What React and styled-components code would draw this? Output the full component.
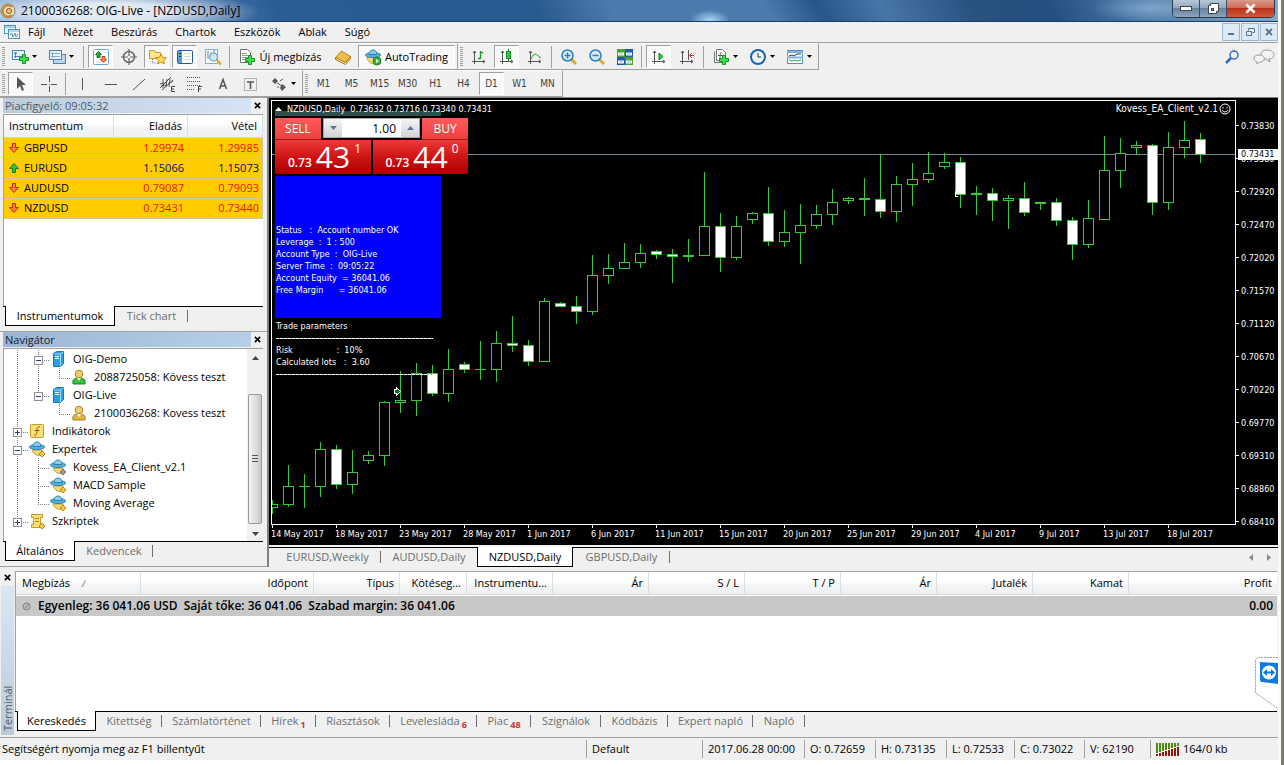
import React from "react";
import styled, { createGlobalStyle, css } from "styled-components";

const GlobalStyle = createGlobalStyle`
  * {
    box-sizing: border-box;
  }
  body {
    margin: 0;
    background-color: #ffffff;
    font-family: "Open Sans", sans-serif;
    font-size: 11px;
    line-height: 16px;
    color: #000000;
  }
  button, input {
    font: inherit;
    color: inherit;
    margin: 0;
    padding: 0;
    border: 0;
    background: none;
  }
  a {
    color: inherit;
    text-decoration: none;
  }
  ul {
    list-style: none;
    margin: 0;
    padding: 0;
  }
  svg {
    display: block;
    flex-shrink: 0;
  }
`;

/* ---------- window ---------- */

const Desktop = styled.div`
  display: flex;
  flex-direction: column;
  height: 100vh;
  min-height: 700px;
  padding-bottom: 5px;
  border-right: 3px solid #7b7b73;
  overflow: hidden;
`;
const Window = styled.div`
  display: flex;
  flex-direction: column;
  flex: 1;
  min-height: 0;
  background-color: #f0f0f0;
  border-right: 3px solid #fafafa;
`;
const TitleBar = styled.header`
  display: flex;
  align-items: flex-start;
  justify-content: space-between;
  height: 22px;
  border-bottom: 1px solid #1d3d68;
  background:
    radial-gradient(ellipse 150px 22px at 110px 12px, #ffffffcc 40%, #ffffff00 100%),
    radial-gradient(ellipse 20px 10px at 710px 20px, #a9d4f5, #a9d4f500),
    radial-gradient(ellipse 60px 14px at 1150px 8px, #9fc0dc99, #9fc0dc00),
    linear-gradient(60deg, #8fb2d6 0%, #5d88bb 12%, #2a5c96 22%, #28598f 42%, #4c7bae 48%, #4b7aad 60%, #28568a 64%, #4876a8 69%, #27517f 76%, #24507f 82%, #4473a4 88%, #86acd0 100%);
`;
const TitleText = styled.h1`
  display: flex;
  align-items: center;
  gap: 5px;
  margin: 0;
  height: 21px;
  font-size: 12px;
  font-weight: 400;
`;
const CaptionButtons = styled.div`
  display: flex;
  margin-right: 3px;
  height: 18px;
  border: 1px solid #2b3a4a;
  border-top: 0;
  border-radius: 0 0 5px 5px;
  overflow: hidden;
`;
const CaptionButton = styled.button`
  display: flex;
  align-items: center;
  justify-content: center;
  width: ${(p) => (p.$close ? "47px" : "27px")};
  border-right: ${(p) => (p.$close ? "0" : "1px solid #3c4d60")};
  background: ${(p) =>
    p.$close
      ? "linear-gradient(#d99a8c, #cf6a55 45%, #b8321b 50%, #d2593a)"
      : "linear-gradient(#b7c8d8, #93a8bd 45%, #68839f 50%, #8ba6c0)"};
`;
const MenuBar = styled.nav`
  display: flex;
  align-items: center;
  justify-content: space-between;
  height: 21px;
  border-bottom: 1px solid #a0a0a0;
  ul {
    display: flex;
    align-items: center;
    gap: 18px;
  }
`;
const MenuLeft = styled.div`
  display: flex;
  align-items: center;
  gap: 8px;
  padding-left: 4px;
`;
const ChildButtons = styled.div`
  display: flex;
  gap: 1px;
  button {
    display: flex;
    align-items: center;
    justify-content: center;
    width: 18px;
    height: 18px;
    border: 1px solid #9fb6c8;
    background-color: #dceaf6;
  }
`;

/* ---------- toolbars ---------- */

const ToolRow = styled.div`
  display: flex;
  align-items: stretch;
  height: 27px;
`;
const ToolGroup = styled.div`
  display: flex;
  align-items: center;
  gap: 3px;
  padding: 0 2px;
  border-top: 1px solid #ffffff;
  border-right: 1px solid #a0a0a0;
  border-bottom: 1px solid #a0a0a0;
`;
const Grip = styled.span`
  width: 3px;
  height: 19px;
  background: repeating-linear-gradient(#a0a0a0 0 1px, #f0f0f0 1px 2px);
`;
const Separator = styled.span`
  width: 1px;
  height: 22px;
  margin: 0 1px;
  background-color: #a0a0a0;
`;
const ToolButton = styled.button`
  display: flex;
  align-items: center;
  justify-content: center;
  gap: 4px;
  width: ${(p) => p.$width || 25}px;
  height: 23px;
  white-space: nowrap;
  border: 1px solid transparent;
  ${(p) =>
    p.$pressed &&
    css`
      background-color: #f9f9f9;
      border-color: #a0a0a0 #ffffff #ffffff #a0a0a0;
    `}
`;
const PeriodButton = styled(ToolButton)`
  font-family: "DejaVu Sans Condensed", sans-serif;
  font-size: 10px;
  color: #404040;
`;
const ToolRight = styled.div`
  display: flex;
  align-items: center;
  gap: 14px;
  margin-left: auto;
  padding-right: 3px;
`;

/* ---------- panels ---------- */

const Workspace = styled.main`
  display: flex;
  flex: 1;
  min-height: 0;
`;
const Sidebar = styled.aside`
  display: flex;
  flex-direction: column;
  width: 269px;
  flex-shrink: 0;
  border-top: 1px solid #a0a0a0;
  border-right: 2px solid #808080;
`;
const Panel = styled.section`
  display: flex;
  flex-direction: column;
  height: ${(p) => (p.$fill ? "auto" : "234px")};
  flex: ${(p) => (p.$fill ? "1" : "none")};
  min-height: 0;
  padding: 0 4px 5px 3px;
  border-bottom: 1px solid #a0a0a0;
`;
const PanelTitle = styled.h2`
  display: flex;
  justify-content: space-between;
  align-items: center;
  height: 15px;
  margin: 0 0 1px;
  padding-left: 2px;
  font-size: 11px;
  font-weight: 400;
  color: ${(p) => (p.$active ? "#1a1a2a" : "#4d5a66")};
  background: ${(p) =>
    p.$active
      ? "linear-gradient(90deg, #9bb6d4, #b8d0ea)"
      : "linear-gradient(90deg, #bccddc, #d6e5f5)"};
  button {
    display: flex;
    align-items: center;
    justify-content: center;
    width: 12px;
    height: 15px;
    background-color: #f0f0f0;
  }
`;
const PanelBody = styled.div`
  display: flex;
  flex: 1;
  min-height: 0;
  overflow: hidden;
  background-color: #ffffff;
  border-top: 1px solid #a0a0a0;
  border-left: 1px solid #a0a0a0;
`;
const TabStrip = styled.div`
  display: flex;
  align-items: flex-start;
  height: ${(p) => p.$height || 20}px;
  padding-left: ${(p) => p.$indent || 2}px;
  border-top: 1px solid #000000;
`;
const TabItem = styled.button`
  position: relative;
  display: flex;
  align-items: center;
  justify-content: center;
  width: ${(p) => p.$width}px;
  height: 18px;
  color: #6d6d6d;
  &::after {
    content: "";
    position: absolute;
    right: 0;
    top: 3px;
    height: 12px;
    border-right: 1px solid ${(p) => (p.$plain ? "transparent" : "#6d6d6d")};
  }
  sub {
    margin-left: 2px;
    padding-top: 7px;
    font-size: 9px;
    font-weight: 700;
    line-height: 9px;
    color: #d03030;
  }
  ${(p) =>
    p.$active &&
    css`
      height: 20px;
      margin-top: -1px;
      color: #000000;
      background-color: #ffffff;
      border: 1px solid #000000;
      border-top: 0;
      &::after {
        display: none;
      }
    `}
`;

const headCell = css`
  height: 23px;
  padding: 0 5px;
  font-weight: 400;
  background: linear-gradient(#ffffff 40%, #f3f4f6 60%, #f0f1f3);
  border-right: 1px solid #dcdfe3;
  border-bottom: 1px solid #d5d5d5;
`;
const QuoteTable = styled.table`
  width: 100%;
  height: 104px;
  border-collapse: separate;
  border-spacing: 0;
  table-layout: fixed;
  th {
    ${headCell}
    text-align: right;
  }
  th:first-child, td:first-child {
    text-align: left;
  }
  td {
    height: 20px;
    padding: 0 3px 0 5px;
    text-align: right;
    background-color: #ffcc00;
    border-right: 1px solid #c9c6a4;
    border-bottom: 1px solid #c9c6a4;
  }
  td span {
    display: flex;
    align-items: center;
    gap: 5px;
  }
`;
const QuoteValue = styled.td`
  color: ${(p) => (p.$up ? "#0a0a78" : "#e81500")};
`;

const Tree = styled.ul`
  flex: 1;
  min-width: 0;
  && {
    padding-top: 1px;
  }
  overflow: hidden;
`;
const TreeItem = styled.li`
  display: flex;
  align-items: center;
  height: 18px;
  white-space: nowrap;
  a {
    margin-left: 7px;
  }
`;
const ScrollBar = styled.div`
  display: flex;
  flex-direction: column;
  align-items: center;
  justify-content: space-between;
  width: 16px;
  padding: 7px 0 5px;
  background-color: #f0f0f0;
`;
const ScrollThumb = styled.div`
  display: flex;
  align-items: center;
  justify-content: center;
  width: 14px;
  height: 130px;
  margin-top: 26px;
  border: 1px solid #989898;
  border-radius: 2px;
  background: linear-gradient(90deg, #f5f5f5, #dcdcdc 60%, #c4c4c8);
`;

/* ---------- chart ---------- */

const ChartPane = styled.section`
  display: flex;
  flex-direction: column;
  flex: 1;
  min-width: 0;
  border-top: 1px solid #808080;
`;
const ChartFrame = styled.div`
  display: flex;
  flex: 1;
  min-height: 0;
  padding: 2px 0 0 2px;
  background-color: #000000;
  color: #ffffff;
  font-family: "DejaVu Sans Condensed", sans-serif;
  font-size: 9px;
  line-height: 12px;
`;
const PlotColumn = styled.div`
  display: flex;
  flex-direction: column;
  flex: 1;
  min-width: 0;
`;
const Plot = styled.div`
  position: relative;
  flex: 1;
  min-height: 0;
  overflow: hidden;
  border: 1px solid #ffffff;
  svg.candles {
    width: 100%;
    height: 100%;
  }
`;
const TimeAxis = styled.div`
  display: flex;
  height: 20px;
  overflow: hidden;
  span {
    width: 64px;
    flex-shrink: 0;
    white-space: nowrap;
  }
  span::before {
    content: "";
    display: block;
    height: 3px;
    margin-left: 1px;
    border-left: 1px solid #ffffff;
  }
`;
const PriceAxis = styled.div`
  position: relative;
  width: 42px;
  padding-top: 9px;
  span {
    display: flex;
    align-items: center;
    height: 33px;
  }
  span::before {
    content: "";
    width: 3px;
    margin-right: 2px;
    border-top: 1px solid #ffffff;
  }
`;
const LastPrice = styled.b`
  position: absolute;
  left: 2px;
  right: 0;
  top: 49px;
  height: 11px;
  padding-left: 3px;
  font-weight: 400;
  line-height: 11px;
  color: #000000;
  background-color: #ffffff;
`;
const ChartCaption = styled.div`
  position: absolute;
  z-index: 1;
  top: 2px;
  left: 3px;
  right: 4px;
  display: flex;
  align-items: center;
  gap: 5px;
  white-space: pre;
`;
const ExpertName = styled.span`
  display: flex;
  align-items: center;
  gap: 1px;
  margin-left: auto;
  font-size: 10px;
`;
const Comment = styled.div`
  position: absolute;
  top: ${(p) => p.$top}px;
  left: 3px;
  width: 166px;
  height: ${(p) => p.$height}px;
  padding-left: 1px;
  background-color: ${(p) => p.$color || "transparent"};
  white-space: pre;
  overflow: hidden;
`;
const CommentText = styled.p`
  margin: ${(p) => p.$offset || 0}px 0 0;
`;
const Dashes = styled.hr`
  width: 157px;
  height: 1px;
  margin: 6px 0 5px;
  border: 0;
  background: repeating-linear-gradient(90deg, #ffffff 0 3px, #888888 3px 4px);
`;
const TradePanel = styled.div`
  position: absolute;
  top: 17px;
  left: 3px;
  display: flex;
  flex-direction: column;
  width: 193px;
  background-color: #000000;
  font-family: "Open Sans", sans-serif;
`;
const TradeRow = styled.div`
  display: flex;
  justify-content: space-between;
`;
const SideButton = styled.button`
  width: 46px;
  height: 22px;
  font-size: 12px;
  background: linear-gradient(#ff5a5a, #ee3f3f);
  border-bottom: 1px solid #a01818;
`;
const Volume = styled.div`
  display: flex;
  align-items: stretch;
  width: 97px;
  height: 20px;
  border: 1px solid #a8a8a8;
  background-color: #ffffff;
  button {
    display: flex;
    align-items: center;
    justify-content: center;
    width: 18px;
    background: linear-gradient(#f4f4f4, #d4d4d8);
  }
  input {
    flex: 1;
    min-width: 0;
    padding-right: 5px;
    font-size: 12px;
    text-align: right;
    color: #000000;
  }
`;
const PriceButton = styled.button`
  display: flex;
  align-items: flex-end;
  justify-content: center;
  gap: 4px;
  width: ${(p) => p.$width}px;
  height: 34px;
  padding: 0 0 5px 3px;
  line-height: 1;
  background: linear-gradient(#ec3a3a, #cf1414 50%, #ac0000);
  b {
    font-size: 12px;
    font-weight: 600;
  }
  strong {
    font-size: 30px;
    font-weight: 400;
    line-height: 24px;
  }
  i {
    align-self: flex-start;
    padding-top: 3px;
    font-size: 12px;
    font-style: normal;
  }
`;
const ChartTabs = styled.div`
  display: flex;
  justify-content: space-between;
  height: 22px;
  padding-top: 2px;
  background-color: #f0f0f0;
`;
const ChartTabStrip = styled(TabStrip)`
  flex: 1;
`;
const TabArrows = styled.div`
  display: flex;
  gap: 14px;
  align-items: center;
  height: 18px;
  margin-left: auto;
  padding-right: 7px;
`;

/* ---------- terminal ---------- */

const Terminal = styled.section`
  position: relative;
  display: flex;
  height: 171px;
  flex-shrink: 0;
  padding: 4px 1px 0 1px;
  border-bottom: 1px solid #a0a0a0;
`;
const TerminalSide = styled.div`
  display: flex;
  flex-direction: column;
  align-items: center;
  width: 13px;
  margin: 1px 1px 2px 0;
  gap: 4px;
  button {
    height: 10px;
  }
  h2 {
    flex: 1;
    width: 13px;
    margin: 0;
    padding-top: 4px;
    line-height: 13px;
    font-size: 11px;
    font-weight: 400;
    color: #4d5a66;
    writing-mode: vertical-rl;
    transform: rotate(180deg);
    background: linear-gradient(#b9cbd9, #d9e7f5);
  }
`;
const TerminalMain = styled.div`
  display: flex;
  flex-direction: column;
  flex: 1;
  min-width: 0;
`;
const TerminalTable = styled.table`
  width: 100%;
  height: 44px;
  border-collapse: separate;
  border-spacing: 0;
  table-layout: fixed;
  th {
    ${headCell}
    text-align: right;
    white-space: nowrap;
  }
  th:first-child {
    text-align: left;
    padding-left: 6px;
  }
  th:last-child {
    border-right: 0;
  }
  td {
    height: 20px;
    padding: 0 4px 0 6px;
    font-size: 12px;
    font-weight: 600;
    white-space: pre;
    background-color: #c8c8c8;
    border-top: 1px solid #ffffff;
  }
  td:last-child {
    text-align: right;
  }
  td span {
    display: flex;
    align-items: center;
    gap: 7px;
  }
`;
const SortMark = styled.i`
  margin-left: 12px;
  font-size: 9px;
  color: #666666;
`;
const RemoteTab = styled.div`
  position: absolute;
  right: 0;
  top: 90px;
`;
const StatusBar = styled.footer`
  display: flex;
  align-items: center;
  height: 22px;
  flex-shrink: 0;
`;
const StatusHint = styled.span`
  flex: 1;
  padding-left: 2px;
`;
const StatusCell = styled.span`
  display: flex;
  align-items: center;
  gap: 3px;
  width: ${(p) => p.$width}px;
  height: 18px;
  padding-left: 5px;
  border-left: 1px solid #a0a0a0;
  white-space: nowrap;
`;

/* ---------- icons ---------- */

const Plus = ({ x = 8, y = 6 }) => (
  <path
    d={`M${x + 3.5} ${y + 0.5}h3v3h3v3h-3v3h-3v-3h-3v-3h3z`}
    fill="#3fe04a"
    stroke="#12961e"
    strokeWidth="1"
  />
);
const AxesPath = () => (
  <path d="M3.500 2v13M1 12.500h13M2 4l1.500-2 1.500 2M12 11l2 1.500-2 1.500" fill="none" stroke="#555" />
);
const Hat = ({ body = "M3 9c2 5 6 6 9 5l1-5z" }) => (
  <>
    <path d={body} fill="#f3d878" stroke="#c39c34" />
    <ellipse cx="8" cy="6" rx="7.500" ry="2.500" fill="#58b0df" stroke="#3080ae" />
    <path d="M4 5.500c0-6 8-6 8 0z" fill="#86cdf0" stroke="#3080ae" />
  </>
);

const glyphs = {
  logo: (
    <>
      <circle cx="8" cy="8" r="7" fill="#e9dcc6" stroke="#8d7a5c" />
      <path d="M12 4a5.500 5.500 0 1 0 0 8" fill="none" stroke="#c78a2e" strokeWidth="2" />
      <circle cx="9" cy="8" r="2.500" fill="#f4c46a" stroke="#8a5a1a" />
    </>
  ),
  charts: (
    <>
      <rect x="0.500" y="1.500" width="11" height="8" fill="#e7f3fb" stroke="#4c93bd" />
      <rect x="4.500" y="5.500" width="11" height="9" fill="#fff" stroke="#4c93bd" />
      <path d="M1 3h10M5 7h10" stroke="#6bb0d6" />
      <path d="M6 11l2-2 1 4 2-4 1 4 2-3" fill="none" stroke="#4c93bd" />
    </>
  ),
  newChart: (
    <>
      <rect x="0.500" y="1.500" width="12" height="9" fill="#e8f4fc" stroke="#4b83b5" />
      <path d="M3.500 3v6M2 7.500h9M2 5l1.500-2 1.500 2" fill="none" stroke="#4b83b5" />
      <Plus x={7} y={5} />
    </>
  ),
  profiles: (
    <>
      <rect x="4.500" y="5.500" width="12" height="9" fill="#bcd9f0" stroke="#4b83b5" />
      <rect x="0.500" y="1.500" width="12" height="9" fill="#e8f4fc" stroke="#4b83b5" />
      <path d="M3.500 3v6M2 7.500h9M2 4.500h9" stroke="#7fadd2" />
    </>
  ),
  marketWatch: (
    <>
      <rect x="0.500" y="0.500" width="15" height="15" rx="1" fill="#fff" stroke="#6da6da" />
      <path d="M9 3h4M3 13h5" stroke="#d5e2ee" />
      <path d="M5.500 2.500l3 3h-1.500v3h-3v-3h-1.500z" fill="#29b33a" stroke="#11751d" />
      <path d="M10.500 13.500l3-3h-1.500v-3h-3v3h-1.500z" fill="#ff8c5a" stroke="#d23a10" />
    </>
  ),
  dataWindow: (
    <>
      <circle cx="8" cy="8" r="5.500" fill="none" stroke="#666" strokeWidth="1.500" />
      <path d="M8 0v7M8 9v7M0 8h7M9 8h7" stroke="#666" strokeWidth="1.200" />
    </>
  ),
  navigator: (
    <>
      <path d="M0.500 1.500h5l1 2h5v6h-11z" fill="#fbe48a" stroke="#c89f2a" />
      <path d="M3.500 10v4h4" fill="none" stroke="#777" strokeDasharray="1 1" />
      <path d="M12 5l1.500 3.500 4 .3-3 2.500 1 3.700-3.500-2-3.500 2 1-3.700-3-2.500 4-.3z" fill="#ffdf55" stroke="#c48c10" />
    </>
  ),
  terminal: (
    <>
      <rect x="0.500" y="1.500" width="15" height="13" rx="1" fill="#fff" stroke="#1f5a9c" />
      <rect x="1" y="2" width="4" height="12" fill="#5a9bdc" />
      <path d="M7 4.500h7M7 7.500h7M7 10.500h7" stroke="#c5dcf0" />
      <path d="M2 4.500h2M2 7.500h2" stroke="#0f3f78" />
    </>
  ),
  tester: (
    <>
      <rect x="0.500" y="0.500" width="12" height="14" fill="#f3f9fd" stroke="#86b0cc" />
      <path d="M3 2v8M6 3v7M9 1v8" stroke="#6d8ea4" />
      <circle cx="8.500" cy="8" r="4" fill="#cfe7f7cc" stroke="#5c9bc8" />
      <path d="M12 11l4 4.500" stroke="#e0a930" strokeWidth="2.500" />
    </>
  ),
  newOrder: (
    <>
      <path d="M1.500 0.500h7l3 3v10h-10z" fill="#fff" stroke="#777" />
      <path d="M3 4.500h5M3 6.500h6M3 8.500h6M3 10.500h3" stroke="#999" />
      <Plus x={6} y={6} />
    </>
  ),
  book: (
    <>
      <path d="M0.500 8.500v2l10 5 5-6v-2l-5 6z" fill="#fff1bf" stroke="#a97514" />
      <path d="M0.500 8.500l6-6.500 9 5.500-5 6z" fill="#efbd45" stroke="#b98420" />
    </>
  ),
  expert: (
    <>
      <Hat />
      <path d="M13 10l3 3-3 3-3-3z" fill="#f4c53e" stroke="#b98817" />
    </>
  ),
  expertOff: (
    <>
      <Hat />
      <path d="M13 10l3 3-3 3-3-3z" fill="#999" stroke="#777" />
    </>
  ),
  autoTrading: (
    <>
      <Hat body="M2 8c1 6 5 7 9 7l2-7z" />
      <circle cx="12" cy="12" r="4" fill="#31b53c" stroke="#148a20" />
      <path d="M11 10v4l3-2z" fill="#fff" />
    </>
  ),
  bars: (
    <>
      <AxesPath />
      <path d="M9.500 2v8M9.500 3.500h2.500M7 9.500h2.500" stroke="#1a9a2a" strokeWidth="1.300" />
    </>
  ),
  candle: (
    <>
      <AxesPath />
      <path d="M9.500 0v12" stroke="#148a20" />
      <rect x="7.500" y="2.500" width="4" height="7" fill="#32c944" stroke="#148a20" />
    </>
  ),
  line: (
    <>
      <AxesPath />
      <path d="M4 10c2-5 4-6 6-4l4 3" fill="none" stroke="#1a9a2a" />
    </>
  ),
  zoomIn: (
    <>
      <path d="M10 10l5 5" stroke="#d9a928" strokeWidth="3" />
      <circle cx="6.500" cy="6.500" r="5.500" fill="#d5ecfa" stroke="#2d7cc0" strokeWidth="1.500" />
      <path d="M6.500 3.500v6M3.500 6.500h6" stroke="#2d7cc0" strokeWidth="1.500" />
    </>
  ),
  zoomOut: (
    <>
      <path d="M10 10l5 5" stroke="#d9a928" strokeWidth="3" />
      <circle cx="6.500" cy="6.500" r="5.500" fill="#d5ecfa" stroke="#2d7cc0" strokeWidth="1.500" />
      <path d="M3.500 6.500h6" stroke="#2d7cc0" strokeWidth="1.500" />
    </>
  ),
  tile: (
    <>
      <rect x="0" y="0" width="8" height="8" fill="#4aa32c" />
      <rect x="8" y="0" width="8" height="8" fill="#2458b0" />
      <rect x="0" y="8" width="8" height="8" fill="#2458b0" />
      <rect x="8" y="8" width="8" height="8" fill="#4aa32c" />
      <path d="M1 5h6M9 5h6M1 13h6M9 13h6" stroke="#fff" strokeWidth="3" />
      <path d="M2 5h4M10 5h4M2 13h4M10 13h4" stroke="#9bc2a0" />
    </>
  ),
  autoScroll: (
    <>
      <AxesPath />
      <path d="M8 4v7l4-3.500z" fill="#32c944" stroke="#148a20" />
    </>
  ),
  shift: (
    <>
      <AxesPath />
      <path d="M9.500 1v10" stroke="#555" />
      <path d="M15 6.500h-4M13 4l-2.500 2.500 2.500 2.500" fill="none" stroke="#c33a10" />
    </>
  ),
  indicators: (
    <>
      <path d="M3.500 0.500h6l3 3v8h-9z" fill="#fff" stroke="#777" />
      <path d="M1.500 2.500v11h8" fill="none" stroke="#777" />
      <path d="M9 4c-2-1-2 1-2 6M5 6.500h4" fill="none" stroke="#555" />
      <Plus x={6} y={6} />
    </>
  ),
  clock: (
    <>
      <circle cx="8" cy="8" r="7" fill="#e9f4fb" stroke="#1c63b2" strokeWidth="2" />
      <path d="M8 4v4h3" fill="none" stroke="#333" />
    </>
  ),
  template: (
    <>
      <rect x="0.500" y="1.500" width="15" height="13" fill="#fff" stroke="#5490c0" />
      <path d="M0 3h16M0 8.500h16" stroke="#7cb4e0" strokeWidth="2" />
      <path d="M2 7l3-1 2 1 3-2 4 0" fill="none" stroke="#333" />
      <path d="M2 11l3 1 3-1 2 1 4-1" fill="none" stroke="#3a9a3a" />
    </>
  ),
  cursor: <path d="M4 1v12l3-3 2 5 2-1-2-5h4z" fill="#555" />,
  crosshair: <path d="M8.500 0v6M8.500 10v6M0 8.500h6M10 8.500h6M8 8.500h1" stroke="#555" />,
  vline: <path d="M7.500 2v12" stroke="#555" />,
  hline: <path d="M2 8.500h12" stroke="#555" />,
  trend: <path d="M2 14L14 3" stroke="#555" />,
  channel: (
    <>
      <path d="M1 12L12 1M3 14L14 4M1 8l5-1M4 12V3M7 11l1-8M9 8l5-3M10 11l1-8M2 10l6-1" fill="none" stroke="#555" />
      <path d="M16 10.500h-3.500v5H16M12.500 13H15" fill="none" stroke="#444" />
    </>
  ),
  fibo: (
    <>
      <path d="M0 1.500h14M0 5.500h14M0 9.500h14M0 13.500h8" stroke="#555" strokeDasharray="1 1" />
      <path d="M15 10.500h-3.500V16M11.500 13H14" fill="none" stroke="#444" />
    </>
  ),
  letterA: <path d="M4.500 13L8 3.500l3.500 9.500M5.500 10h5" fill="none" stroke="#555" strokeWidth="1.500" />,
  label: (
    <>
      <rect x="1.500" y="2.500" width="12" height="12" fill="none" stroke="#777" strokeDasharray="1 1" />
      <path d="M4 6h7M7.500 6v7" stroke="#555" strokeWidth="1.600" />
    </>
  ),
  arrows: (
    <>
      <path d="M4 2l3 3-3 3-3-3zM11 8l4 3-4 4-2-3z" fill="#555" />
      <path d="M6 11l2 0M6 7l5 3M9 5l3-2" stroke="#555" />
    </>
  ),
  server: (
    <>
      <path d="M3.500 2.500l3-2h7v12l-3 3h-7z" fill="#2aa0e0" stroke="#1678b4" />
      <path d="M10.500 15V3h-6M10.500 3l3-2" fill="none" stroke="#9fdcfa" />
      <path d="M5 5.500h4M5 7.500h4" stroke="#fff" />
    </>
  ),
  userGreen: (
    <>
      <path d="M2 15c-1-5 2-6 6-6s7 1 6 6z" fill="#2fc23a" stroke="#148a20" />
      <circle cx="8" cy="5" r="3.800" fill="#f0cf6a" stroke="#a98020" />
      <path d="M6 9l2 3 2-3" fill="#fff" />
    </>
  ),
  userGold: (
    <>
      <path d="M2 15c-1-5 2-6 6-6s7 1 6 6z" fill="#dcb640" stroke="#a98020" />
      <circle cx="8" cy="5" r="3.800" fill="#f0cf6a" stroke="#a98020" />
      <path d="M6 9l2 3 2-3" fill="#fff" />
    </>
  ),
  indicator: (
    <>
      <rect x="1.500" y="1.500" width="13" height="13" rx="1" fill="#fbe07a" stroke="#c59b22" />
      <path d="M11 4c-3-1-3 1-3 4s-1 5-3 4M5.500 7.500h5" fill="none" stroke="#8a6410" />
    </>
  ),
  script: (
    <>
      <path d="M2.500 1.500h11v3h-2v8h2v2h-11v-3h2v-7h-2z" fill="#fbe07a" stroke="#c59b22" />
      <path d="M6 5.500h4M6 8.500h4" stroke="#b98817" />
      <path d="M13 10l3 3-3 3-3-3z" fill="#f4c53e" stroke="#b98817" />
    </>
  ),
};

const Icon = ({ name, size = 16 }) => (
  <svg width={size} height={size} viewBox="0 0 16 16" overflow="visible" aria-hidden="true">
    {glyphs[name]}
  </svg>
);
const DropArrow = () => (
  <svg width="5" height="3" viewBox="0 0 5 3" aria-hidden="true">
    <path d="M0 0h5L2.500 3z" fill="#000" />
  </svg>
);
const Cross = ({ size = 7, color = "#000", weight = 1.8 }) => (
  <svg width={size} height={size} viewBox="0 0 8 8" aria-hidden="true">
    <path d="M1 1l6 6M7 1L1 7" stroke={color} strokeWidth={weight} />
  </svg>
);
const Triangle = ({ up, color = "#444" }) => (
  <svg width="7" height="4" viewBox="0 0 7 4" aria-hidden="true">
    <path d={up ? "M0 4h7L3.500 0z" : "M0 0h7L3.500 4z"} fill={color} />
  </svg>
);
const QuoteArrow = ({ up }) => (
  <svg width="10" height="10" viewBox="0 0 10 10" aria-hidden="true">
    <path
      d="M3.500 0.500h3v4h3L5 9.500 0.500 4.500h3z"
      transform={up ? "rotate(180 5 5)" : undefined}
      fill={up ? "#2fc23a" : "#ff7a3c"}
      stroke={up ? "#0f7a1c" : "#b8330c"}
    />
  </svg>
);
const Smiley = () => (
  <svg width="12" height="12" viewBox="0 0 12 12" aria-hidden="true">
    <circle cx="6" cy="6" r="5" fill="none" stroke="#fff" />
    <path d="M4 4v1.500M8 4v1.500M3 7c1 2.500 5 2.500 6 0" fill="none" stroke="#fff" />
  </svg>
);

/* ---------- data ---------- */

const menus = ["Fájl", "Nézet", "Beszúrás", "Chartok", "Eszközök", "Ablak", "Súgó"];
const periods = ["M1", "M5", "M15", "M30", "H1", "H4", "D1", "W1", "MN"];

const quotes = [
  { symbol: "GBPUSD", bid: "1.29974", ask: "1.29985" },
  { symbol: "EURUSD", bid: "1.15066", ask: "1.15073", up: true },
  { symbol: "AUDUSD", bid: "0.79087", ask: "0.79093" },
  { symbol: "NZDUSD", bid: "0.73431", ask: "0.73440" },
];

// guides: depths whose vertical line passes through the row
const tree = [
  { text: "OIG-Demo", icon: "server", depth: 1, box: "-", guides: [0] },
  { text: "2088725058: Kövess teszt", icon: "userGreen", depth: 2, guides: [0, 1], last: true },
  { text: "OIG-Live", icon: "server", depth: 1, box: "-", guides: [0], last: true },
  { text: "2100036268: Kovess teszt", icon: "userGold", depth: 2, guides: [0], last: true },
  { text: "Indikátorok", icon: "indicator", depth: 0, box: "+", guides: [] },
  { text: "Expertek", icon: "expert", depth: 0, box: "-", guides: [] },
  { text: "Kovess_EA_Client_v2.1", icon: "expertOff", depth: 1, guides: [0] },
  { text: "MACD Sample", icon: "expert", depth: 1, guides: [0] },
  { text: "Moving Average", icon: "expert", depth: 1, guides: [0], last: true },
  { text: "Szkriptek", icon: "script", depth: 0, box: "+", guides: [], last: true },
];

const prices = [
  "0.73830", "0.73380", "0.72920", "0.72470", "0.72020", "0.71570", "0.71120",
  "0.70670", "0.70220", "0.69770", "0.69310", "0.68860", "0.68410",
];
const dates = [
  "14 May 2017", "18 May 2017", "23 May 2017", "28 May 2017", "1 Jun 2017",
  "6 Jun 2017", "11 Jun 2017", "15 Jun 2017", "20 Jun 2017", "25 Jun 2017",
  "29 Jun 2017", "4 Jul 2017", "9 Jul 2017", "13 Jul 2017", "18 Jul 2017",
];

// [high, body top, body bottom, low, falling]
const candles = [
  [399, 403, 406, 412], [364, 385, 403, 405], [373, 385, 385, 406],
  [341, 348, 385, 395], [344, 348, 383, 387, 1], [349, 371, 383, 392],
  [350, 354, 359, 362], [300, 301, 354, 364], [270, 299, 301, 311],
  [262, 272, 299, 314], [264, 272, 292, 294, 1], [248, 268, 292, 300],
  [261, 263, 268, 271, 1], [240, 268, 268, 278], [230, 242, 268, 280],
  [215, 242, 244, 250, 1], [239, 244, 260, 264, 1], [197, 200, 260, 260],
  [201, 202, 205, 205, 1], [195, 205, 210, 222, 1], [154, 174, 210, 213],
  [153, 167, 174, 182], [142, 161, 167, 167], [143, 152, 161, 166],
  [149, 150, 153, 157, 1], [148, 153, 155, 181, 1], [138, 154, 155, 160],
  [71, 125, 154, 154], [112, 125, 156, 170, 1], [115, 125, 156, 158],
  [111, 112, 118, 122], [86, 112, 140, 144, 1], [109, 131, 140, 145],
  [103, 124, 131, 162], [104, 113, 124, 127], [88, 101, 113, 123],
  [96, 97, 99, 102], [77, 97, 98, 114], [53, 98, 110, 116, 1],
  [75, 83, 110, 120], [62, 78, 83, 104], [51, 72, 78, 81],
  [52, 61, 65, 67], [56, 61, 93, 106, 1], [85, 92, 93, 113],
  [87, 92, 99, 119, 1], [94, 97, 99, 127], [81, 97, 111, 114, 1],
  [101, 101, 102, 108], [97, 101, 119, 124, 1], [116, 119, 143, 158, 1],
  [99, 117, 143, 146], [35, 69, 118, 118], [37, 52, 69, 86],
  [40, 44, 46, 53], [43, 44, 101, 113, 1], [31, 46, 101, 108],
  [20, 39, 46, 56], [32, 38, 53, 61, 1],
];

const account = [
  "Status   :  Account number OK",
  "Leverage  :  1 : 500",
  "Account Type  :  OIG-Live",
  "Server Time  :  09:05:22",
  "Account Equity  = 36041.06",
  "Free Margin      = 36041.06",
].join("\n");

const columns = [
  ["Megbízás", 125], ["Időpont", 173], ["Típus", 86], ["Kötéseg...", 67],
  ["Instrumentu...", 86], ["Ár", 96], ["S / L", 96], ["T / P", 96],
  ["Ár", 96], ["Jutalék", 96], ["Kamat", 96], ["Profit", 0],
];
const terminalTabs = [
  { text: "Kereskedés", width: 79, active: true },
  { text: "Kitettség", width: 66 },
  { text: "Számlatörténet", width: 99 },
  { text: "Hírek", width: 55, count: 1 },
  { text: "Riasztások", width: 74 },
  { text: "Levelesláda", width: 87, count: 6 },
  { text: "Piac", width: 54, count: 48 },
  { text: "Szignálok", width: 70 },
  { text: "Kódbázis", width: 67 },
  { text: "Expert napló", width: 85 },
  { text: "Napló", width: 52 },
];
const statusCells = [
  ["Default", 116], ["2017.06.28 00:00", 102], ["O: 0.72659", 71], ["H: 0.73135", 71],
  ["L: 0.72533", 68], ["C: 0.73022", 70], ["V: 62190", 66],
];

/* ---------- parts ---------- */

const Tabs = ({ items }) =>
  items.map((t) => (
    <TabItem key={t.text} $width={t.width} $active={t.active} $plain={t.plain}>
      {t.text}
      {t.count && <sub>{t.count}</sub>}
    </TabItem>
  ));

const Tool = ({ icon, label, drop, width, pressed, children }) => (
  <ToolButton $width={width} $pressed={pressed} aria-label={label} title={label}>
    <Icon name={icon} />
    {children}
    {drop && <DropArrow />}
  </ToolButton>
);

const Branch = ({ depth, box, guides, last }) => {
  const x = 13 + depth * 21;
  return (
    <svg width={x + 12} height="18" shapeRendering="crispEdges" aria-hidden="true">
      <g stroke="#808080" strokeDasharray="1 1">
        {guides.map((g) => (
          <path key={g} d={`M${13.5 + g * 21} 0v18`} />
        ))}
        <path d={`M${x + 0.5} 0v${last ? 10 : 18}`} />
        <path d={`M${x} 10.500h12`} />
      </g>
      {box && (
        <>
          <rect x={x - 3.5} y="6.500" width="8" height="8" fill="#fff" stroke="#919191" />
          <path
            d={`M${x - 2} 10.500h5${box === "+" ? `M${x + 0.5} 8v5` : ""}`}
            stroke="#22408a"
            fill="none"
          />
        </>
      )}
    </svg>
  );
};

const Candle = ({ index, data }) => {
  const [high, top, bottom, low, falling] = data;
  const x = index * 16 + 0.5;
  return (
    <g stroke="#32cd32">
      <path d={`M${x} ${high}V${low + 1}`} />
      {top === bottom ? (
        <path d={`M${x - 5.5} ${top + 0.5}h11`} />
      ) : (
        <rect
          x={x - 5}
          y={top + 0.5}
          width="10"
          height={bottom - top}
          fill={falling ? "#fff" : "#000"}
        />
      )}
    </g>
  );
};

const MarketWatch = () => (
  <Panel>
    <PanelTitle>
      Piacfigyelő: 09:05:32
      <button aria-label="Bezárás"><Cross /></button>
    </PanelTitle>
    <PanelBody>
      <QuoteTable>
        <colgroup>
          <col />
          <col width="74" />
          <col width="75" />
        </colgroup>
        <thead>
          <tr>
            <th>Instrumentum</th>
            <th>Eladás</th>
            <th>Vétel</th>
          </tr>
        </thead>
        <tbody>
          {quotes.map((q) => (
            <tr key={q.symbol}>
              <td><span><QuoteArrow up={q.up} />{q.symbol}</span></td>
              <QuoteValue $up={q.up}>{q.bid}</QuoteValue>
              <QuoteValue $up={q.up}>{q.ask}</QuoteValue>
            </tr>
          ))}
        </tbody>
      </QuoteTable>
    </PanelBody>
    <TabStrip>
      <Tabs
        items={[
          { text: "Instrumentumok", width: 110, active: true },
          { text: "Tick chart", width: 73 },
        ]}
      />
    </TabStrip>
  </Panel>
);

const Navigator = () => (
  <Panel $fill>
    <PanelTitle $active>
      Navigátor
      <button aria-label="Bezárás"><Cross /></button>
    </PanelTitle>
    <PanelBody>
      <Tree>
        {tree.map((n) => (
          <TreeItem key={n.text}>
            <Branch {...n} />
            <Icon name={n.icon} />
            <a href="#">{n.text}</a>
          </TreeItem>
        ))}
      </Tree>
      <ScrollBar>
        <Triangle up />
        <ScrollThumb>
          <svg width="6" height="8" aria-hidden="true">
            <path d="M0 .5h6M0 3.500h6M0 6.500h6" stroke="#555" />
          </svg>
        </ScrollThumb>
        <Triangle />
      </ScrollBar>
    </PanelBody>
    <TabStrip>
      <Tabs
        items={[
          { text: "Általános", width: 70, active: true },
          { text: "Kedvencek", width: 78 },
        ]}
      />
    </TabStrip>
  </Panel>
);

const Chart = () => (
  <ChartPane>
    <ChartFrame>
      <PlotColumn>
        <Plot>
          <svg className="candles" shapeRendering="crispEdges">
            <path d="M0 53.500H2000" stroke="#778899" />
            {candles.map((c, i) => (
              <Candle key={i} index={i} data={c} />
            ))}
            <path d="M122.500 288.500h2v-2l4 4-4 4v-2h-2z" fill="#0a7a14" stroke="#fff" />
            <path d="M683 90v5h3" fill="none" stroke="#fff" />
          </svg>
          <ChartCaption>
            <Triangle up color="#fff" />
            <span>NZDUSD,Daily  0.73632 0.73716 0.73340 0.73431</span>
            <ExpertName>Kovess_EA_Client_v2.1<Smiley /></ExpertName>
          </ChartCaption>
          <Comment $top={10} $height={5} $color="#2f4f4f" />
          <Comment $top={75} $height={142} $color="#0000ff">
            <CommentText $offset={48}>{account}</CommentText>
          </Comment>
          <Comment $top={219} $height={62}>
            <CommentText>Trade parameters</CommentText>
            <Dashes />
            <CommentText>{"Risk                 :  10%\nCalculated lots   :  3.60"}</CommentText>
            <Dashes />
          </Comment>
          <TradePanel>
            <TradeRow>
              <SideButton>SELL</SideButton>
              <Volume>
                <button aria-label="Csökkentés"><Triangle color="#5870a8" /></button>
                <input aria-label="Volumen" defaultValue="1.00" />
                <button aria-label="Növelés"><Triangle up color="#5870a8" /></button>
              </Volume>
              <SideButton>BUY</SideButton>
            </TradeRow>
            <TradeRow>
              <PriceButton $width={96}><b>0.73</b><strong>43</strong><i>1</i></PriceButton>
              <PriceButton $width={95}><b>0.73</b><strong>44</strong><i>0</i></PriceButton>
            </TradeRow>
          </TradePanel>
        </Plot>
        <TimeAxis>
          {dates.map((d) => <span key={d}>{d}</span>)}
        </TimeAxis>
      </PlotColumn>
      <PriceAxis>
        {prices.map((p) => <span key={p}>{p}</span>)}
        <LastPrice>0.73431</LastPrice>
      </PriceAxis>
    </ChartFrame>
    <ChartTabs>
      <ChartTabStrip $indent={5}>
        <Tabs
          items={[
            { text: "EURUSD,Weekly", width: 107 },
            { text: "AUDUSD,Daily", width: 96, plain: true },
            { text: "NZDUSD,Daily", width: 96, active: true },
            { text: "GBPUSD,Daily", width: 97 },
          ]}
        />
        <TabArrows>
          <svg width="4" height="7" aria-hidden="true"><path d="M4 0v7L0 3.500z" fill="#888" /></svg>
          <svg width="4" height="7" aria-hidden="true"><path d="M0 0v7l4-3.500z" fill="#888" /></svg>
        </TabArrows>
      </ChartTabStrip>
    </ChartTabs>
  </ChartPane>
);

const TerminalPanel = () => (
  <Terminal>
    <TerminalSide>
      <button aria-label="Bezárás"><Cross /></button>
      <h2>Terminál</h2>
    </TerminalSide>
    <TerminalMain>
      <PanelBody>
        <TerminalTable>
          <colgroup>
            {columns.map(([name, width], i) => <col key={i} width={width || undefined} />)}
          </colgroup>
          <thead>
            <tr>
              {columns.map(([name], i) => (
                <th key={i}>{name}{i === 0 && <SortMark>/</SortMark>}</th>
              ))}
            </tr>
          </thead>
          <tbody>
            <tr>
              <td colSpan={11}>
                <span>
                  <svg width="9" height="9" aria-hidden="true">
                    <circle cx="4.500" cy="4.500" r="3.500" fill="#bbb" stroke="#808080" />
                    <path d="M2.500 6.500l4-4" stroke="#808080" />
                  </svg>
                  {"Egyenleg: 36 041.06 USD  Saját tőke: 36 041.06  Szabad margin: 36 041.06"}
                </span>
              </td>
              <td>0.00</td>
            </tr>
          </tbody>
        </TerminalTable>
      </PanelBody>
      <TabStrip $height={26}>
        <Tabs items={terminalTabs} />
      </TabStrip>
    </TerminalMain>
    <RemoteTab>
      <svg width="23" height="52" viewBox="0 0 23 52" aria-hidden="true">
        <path d="M23 .5H4Q.5.500.5 4v32L23 51.500" fill="#fff" stroke="#999" strokeDasharray="2 1" />
        <path d="M5 5l18 1v21L7 25Q5 25 5 23z" fill="#0f7be0" />
        <circle cx="14" cy="15.500" r="7" fill="#fff" />
        <path d="M8 15.500l4-3.500v2.500h4V12l4 3.500-4 3.500v-2.500h-4V19z" fill="#0f7be0" />
      </svg>
    </RemoteTab>
  </Terminal>
);

const Traffic = () => (
  <svg width="24" height="13" aria-hidden="true">
    {[0, 1, 2, 3, 4, 5, 6, 7].map((i) => (
      <g key={i}>
        <rect x={i * 3} y="0" width="2" height={10 - i} fill="#4f8a10" />
        <rect x={i * 3} y={11 - i} width="2" height={2 + i} fill="#8a1a10" />
      </g>
    ))}
  </svg>
);

const App = () => (
  <Desktop>
    <GlobalStyle />
    <Window>
      <TitleBar>
        <TitleText>
          <Icon name="logo" />
          2100036268: OIG-Live - [NZDUSD,Daily]
        </TitleText>
        <CaptionButtons>
          <CaptionButton aria-label="Kis méret">
            <svg width="12" height="5"><rect x=".5" y=".5" width="11" height="4" fill="#fff" stroke="#444" /></svg>
          </CaptionButton>
          <CaptionButton aria-label="Előző méret">
            <svg width="12" height="12">
              <path d="M3.500 .5h8v8h-2v2h-8v-8h2z" fill="#fff" stroke="#444" />
              <rect x="4.500" y="5.500" width="2" height="2" fill="#7b93ab" stroke="#444" />
            </svg>
          </CaptionButton>
          <CaptionButton $close aria-label="Bezárás">
            <Cross size={11} color="#fff" weight={2} />
          </CaptionButton>
        </CaptionButtons>
      </TitleBar>
      <MenuBar>
        <MenuLeft>
          <Icon name="charts" />
          <ul>
            {menus.map((m) => <li key={m}><a href="#">{m}</a></li>)}
          </ul>
        </MenuLeft>
        <ChildButtons>
          <button aria-label="Kis méret">
            <svg width="8" height="8"><path d="M1 6h6" stroke="#5b7388" strokeWidth="2" /></svg>
          </button>
          <button aria-label="Előző méret">
            <svg width="9" height="9">
              <path d="M2.500 2.500v-2h6v4h-2M.5 3.500h5v4h-5z" fill="none" stroke="#5b7388" />
            </svg>
          </button>
          <button aria-label="Bezárás"><Cross size={8} color="#5b7388" /></button>
        </ChildButtons>
      </MenuBar>
      <ToolRow>
        <ToolGroup>
          <Grip />
          <Tool icon="newChart" label="Új chart" width={33} drop />
          <Tool icon="profiles" label="Profilok" width={35} drop />
          <Separator />
          <Tool icon="marketWatch" label="Piacfigyelő" pressed />
          <Tool icon="dataWindow" label="Adatablak" />
          <Tool icon="navigator" label="Navigátor" pressed />
          <Tool icon="terminal" label="Terminál" pressed />
          <Tool icon="tester" label="Stratégia teszter" />
          <Separator />
          <Tool icon="newOrder" width={93}>Új megbízás</Tool>
          <Tool icon="book" label="MetaEditor" />
          <Tool icon="autoTrading" width={97} pressed>AutoTrading</Tool>
        </ToolGroup>
        <ToolGroup>
          <Grip />
          <Tool icon="bars" label="Oszlopok" />
          <Tool icon="candle" label="Gyertyák" pressed />
          <Tool icon="line" label="Vonal" />
          <Separator />
          <Tool icon="zoomIn" label="Nagyítás" />
          <Tool icon="zoomOut" label="Kicsinyítés" />
          <Tool icon="tile" label="Mozaik" />
          <Separator />
          <Tool icon="autoScroll" label="Automatikus görgetés" pressed />
          <Tool icon="shift" label="Chart eltolás" />
          <Separator />
          <Tool icon="indicators" label="Indikátorok" width={34} drop />
          <Tool icon="clock" label="Időtáv" width={34} drop />
          <Tool icon="template" label="Sablonok" width={34} drop />
        </ToolGroup>
        <ToolRight>
          <button aria-label="Keresés">
            <svg width="14" height="14">
              <circle cx="9" cy="5" r="4" fill="none" stroke="#3568c0" strokeWidth="1.500" />
              <path d="M6 8l-5 5" stroke="#3568c0" strokeWidth="2.500" />
            </svg>
          </button>
          <button aria-label="Csevegés">
            <svg width="22" height="16">
              <path d="M14 1c9 0 9 9 2 9l1 3-4-3C6 9 6 1 14 1z" fill="#f4f4f4" stroke="#999" />
              <path d="M6 6c7 0 7 7 1 7l-3 2v-2C0 12-1 6 6 6z" fill="#f4f4f4" stroke="#999" />
            </svg>
          </button>
        </ToolRight>
      </ToolRow>
      <ToolRow>
        <ToolGroup>
          <Grip />
          <Tool icon="cursor" label="Kurzor" pressed />
          <Tool icon="crosshair" label="Célkereszt" />
          <Separator />
          <Tool icon="vline" label="Függőleges vonal" />
          <Tool icon="hline" label="Vízszintes vonal" />
          <Tool icon="trend" label="Trendvonal" />
          <Tool icon="channel" label="Csatorna" />
          <Tool icon="fibo" label="Fibonacci" />
          <Tool icon="letterA" label="Szöveg" />
          <Tool icon="label" label="Címke" />
          <Tool icon="arrows" label="Nyilak" width={34} drop />
        </ToolGroup>
        <ToolGroup>
          <Grip />
          {periods.map((p) => (
            <PeriodButton key={p} $pressed={p === "D1"}>{p}</PeriodButton>
          ))}
        </ToolGroup>
      </ToolRow>
      <Workspace>
        <Sidebar>
          <MarketWatch />
          <Navigator />
        </Sidebar>
        <Chart />
      </Workspace>
      <TerminalPanel />
      <StatusBar>
        <StatusHint>Segítségért nyomja meg az F1 billentyűt</StatusHint>
        {statusCells.map(([text, width]) => (
          <StatusCell key={text} $width={width}>{text}</StatusCell>
        ))}
        <StatusCell $width={128}><Traffic />164/0 kb</StatusCell>
      </StatusBar>
    </Window>
  </Desktop>
);

export default App;
